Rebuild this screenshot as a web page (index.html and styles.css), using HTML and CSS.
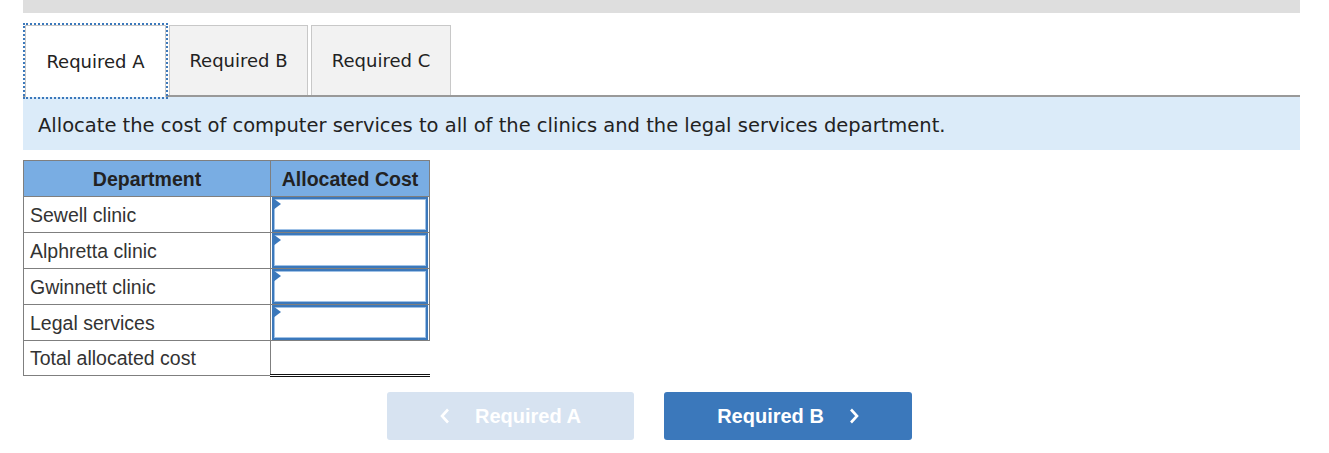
FILE: index.html
```html
<!DOCTYPE html>
<html>
<head>
<meta charset="utf-8">
<link rel="stylesheet" href="styles.css">
</head>
<body>
<div class="page">
  <div class="topbar"></div>
  <div class="tabs">
    <div class="tab active">Required A</div>
    <div class="tab">Required B</div>
    <div class="tab">Required C</div>
  </div>
  <div class="instruction">Allocate the cost of computer services to all of the clinics and the legal services department.</div>
  <table class="alloc">
    <thead>
      <tr><th class="c1">Department</th><th class="c2">Allocated Cost</th></tr>
    </thead>
    <tbody>
      <tr><td class="c1">Sewell clinic</td><td class="c2 inp"><div class="field"><span class="flag"></span></div></td></tr>
      <tr><td class="c1">Alphretta clinic</td><td class="c2 inp"><div class="field"><span class="flag"></span></div></td></tr>
      <tr><td class="c1">Gwinnett clinic</td><td class="c2 inp"><div class="field"><span class="flag"></span></div></td></tr>
      <tr><td class="c1">Legal services</td><td class="c2 inp"><div class="field"><span class="flag"></span></div></td></tr>
      <tr class="total"><td class="c1">Total allocated cost</td><td class="c2 tot"></td></tr>
    </tbody>
  </table>
  <div class="nav">
    <button class="btn prev"><svg class="chev" width="10" height="16" viewBox="0 0 10 16"><polyline points="8,1.5 2,8 8,14.5" fill="none" stroke="#fff" stroke-width="2.6" stroke-linejoin="miter"/></svg><span>Required A</span></button>
    <button class="btn next"><span>Required B</span><svg class="chev" width="10" height="16" viewBox="0 0 10 16"><polyline points="2,1.5 8,8 2,14.5" fill="none" stroke="#fff" stroke-width="2.6" stroke-linejoin="miter"/></svg></button>
  </div>
</div>
</body>
</html>
```
FILE: styles.css
```css
html, body {
  margin: 0;
  padding: 0;
  background: #fff;
}
.page {
  margin-left: 23px;
  width: 1277px;
}
.topbar {
  height: 13px;
  background: #dedede;
}
.tabs {
  display: flex;
  gap: 3px;
  margin-top: 12px;
  padding-left: 2px;
  border-bottom: 2px solid #999;
  height: 70px;
}
.tab {
  box-sizing: border-box;
  height: 70px;
  border: 1px solid #c8c8c8;
  border-bottom: none;
  background: #f2f2f2;
  font-family: "DejaVu Sans", Verdana, sans-serif;
  font-size: 18px;
  color: #222;
  display: flex;
  align-items: center;
  justify-content: center;
  width: 139px;
}
.tab.active {
  background: #fff;
  width: 141px;
  height: 72px;
  margin-bottom: -2px;
  outline: 2px dotted #3b78bb;
  outline-offset: 0px;
}
.tab:nth-child(3) {
  width: 140px;
}
.instruction {
  box-sizing: border-box;
  height: 53px;
  background: #dbebf9;
  font-family: "DejaVu Sans", Verdana, sans-serif;
  font-size: 19.5px;
  color: #222;
  padding: 3px 0 0 15px;
  display: flex;
  align-items: center;
}
.alloc {
  margin-top: 10px;
  border-collapse: collapse;
  font-family: "Liberation Sans", Arial, sans-serif;
  font-size: 19.5px;
  color: #333;
}
.alloc th, .alloc td {
  height: 35px;
  padding: 0;
  border: 1px solid #7f7f7f;
  line-height: 22px;
}
.alloc th {
  background: #79ade3;
  font-weight: bold;
  color: #222;
}
.alloc .c1 {
  width: 247px;
  text-align: left;
  padding-left: 6px;
  box-sizing: border-box;
}
.alloc th.c1 {
  text-align: center;
  padding-left: 0;
}
.alloc .c2 {
  width: 156px;
}
.alloc td.inp {
  padding: 0 1px;
  vertical-align: top;
}
.field {
  position: relative;
  box-sizing: border-box;
  height: 35px;
  border: 2px solid #3b78bb;
  box-shadow: inset 0 0 0 1px #9fc1e6;
  background: #fff;
}
.flag {
  position: absolute;
  left: -1px;
  top: -1px;
  width: 0;
  height: 0;
  border-top: 6px solid transparent;
  border-bottom: 6px solid transparent;
  border-left: 8px solid #3b78bb;
}
.alloc tr.total td {
  height: 33px;
}
.alloc td.tot {
  border-top: 1px solid #111;
  border-bottom: 3px double #111;
  border-right: none;
}
.nav {
  display: flex;
  gap: 30px;
  margin-top: 15px;
  padding-left: 364px;
}
.btn {
  width: 247px;
  height: 48px;
  border: none;
  border-radius: 3px;
  font-family: "Liberation Sans", Arial, sans-serif;
  font-weight: bold;
  font-size: 20px;
  color: #fff;
  display: flex;
  align-items: center;
  justify-content: center;
  gap: 25px;
  padding: 0;
}
.btn.prev {
  background: #d7e3f1;
}
.btn.next {
  width: 248px;
  background: #3b78bb;
}
.chev {
  display: block;
}
```
